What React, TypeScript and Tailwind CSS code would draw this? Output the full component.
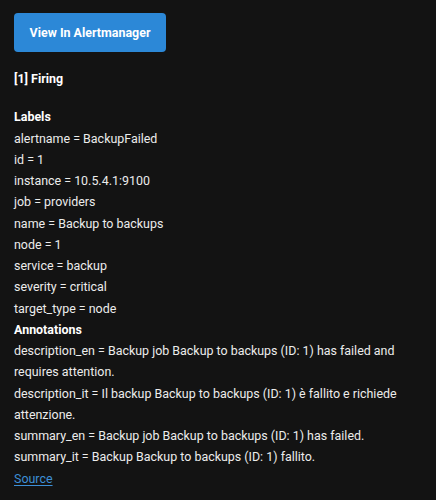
const labels: [string, string][] = [
  ['alertname', 'BackupFailed'],
  ['id', '1'],
  ['instance', '10.5.4.1:9100'],
  ['job', 'providers'],
  ['name', 'Backup to backups'],
  ['node', '1'],
  ['service', 'backup'],
  ['severity', 'critical'],
  ['target_type', 'node'],
]

const annotations: [string, string][] = [
  ['description_en', 'Backup job Backup to backups (ID: 1) has failed and requires attention.'],
  ['description_it', 'Il backup Backup to backups (ID: 1) è fallito e richiede attenzione.'],
  ['summary_en', 'Backup job Backup to backups (ID: 1) has failed.'],
  ['summary_it', 'Backup Backup to backups (ID: 1) fallito.'],
]

export default function App() {
  return (
    <div
      className="min-h-[500px] w-full bg-[#131313] pl-[14px] pr-[14px] pt-[13px] text-[12.45px] leading-[21.25px] text-[#ececec]"
      style={{ fontFamily: 'Roboto, "Liberation Sans", sans-serif' }}
    >
      <button className="h-[39px] w-[152px] rounded-[4px] bg-[#2c88d7] text-[12.45px] font-bold text-white">
        View In Alertmanager
      </button>

      <div className="mt-[16px] font-bold text-white">[1] Firing</div>

      <div className="mt-[17px]">
        <div className="font-bold text-white">Labels</div>
        {labels.map(([k, v]) => (
          <div key={k}>
            {k} = {v}
          </div>
        ))}
        <div className="font-bold text-white">Annotations</div>
        {annotations.map(([k, v]) => (
          <div key={k}>
            {k} = {v}
          </div>
        ))}
        <a href="#" className="text-[#3d8fd6] underline underline-offset-2">
          Source
        </a>
      </div>
    </div>
  )
}
